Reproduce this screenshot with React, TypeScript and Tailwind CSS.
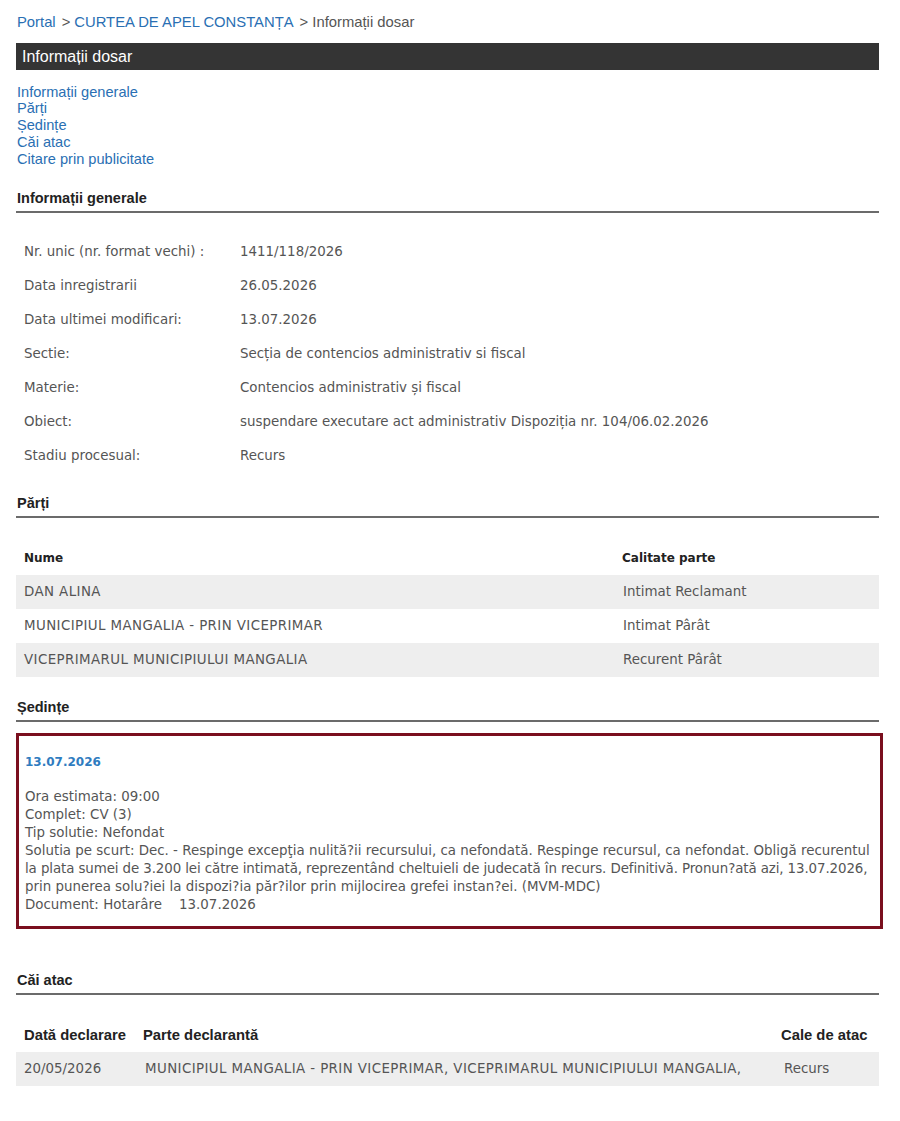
const arial = "font-['Liberation_Sans',Arial,sans-serif]";
const verdana = "font-['DejaVu_Sans',Verdana,sans-serif]";

const info = [
  ["Nr. unic (nr. format vechi) :", "1411/118/2026"],
  ["Data inregistrarii", "26.05.2026"],
  ["Data ultimei modificari:", "13.07.2026"],
  ["Sectie:", "Secția de contencios administrativ si fiscal"],
  ["Materie:", "Contencios administrativ și fiscal"],
  ["Obiect:", "suspendare executare act administrativ Dispoziția nr. 104/06.02.2026"],
  ["Stadiu procesual:", "Recurs"],
];

const parti = [
  ["DAN ALINA", "Intimat Reclamant"],
  ["MUNICIPIUL MANGALIA - PRIN VICEPRIMAR", "Intimat Pârât"],
  ["VICEPRIMARUL MUNICIPIULUI MANGALIA", "Recurent Pârât"],
];

const SectionTitle = ({ title, className }: { title: string; className?: string }) => (
  <div className={`${arial} ${className} text-[14.5px] font-bold text-[#222] leading-[16px] pl-[1px] pb-[5px] border-b-2 border-[#6b6b6b]`}>
    {title}
  </div>
);

export default function App() {
  return (
    <div className="bg-white min-h-[1121px] w-[900px] pl-[16px] pt-[14px] pb-[30px]">
      <div className="w-[863px]">
        {/* breadcrumb */}
        <div className={`${arial} text-[14.8px] leading-[16px] pl-[1px] text-[#555]`}>
          <span className="text-[#2a6fb3]">Portal</span>
          <span className="ml-[6px]">&gt;</span>
          <span className="text-[#2a6fb3] ml-[4px]">CURTEA DE APEL CONSTANȚA</span>
          <span className="ml-[6px]">&gt; Informații dosar</span>
        </div>

        <div className={`${arial} mt-[13px] h-[27px] bg-[#343434] text-white text-[16px] leading-[27px] pl-[6px]`}>
          Informații dosar
        </div>

        {/* nav */}
        <div className={`${arial} mt-[13.5px] text-[14.6px] leading-[16.75px] text-[#2a6fb3] pl-[1px] flex flex-col items-start`}>
          <a href="#gen">Informații generale</a>
          <a href="#parti">Părți</a>
          <a href="#sed">Ședințe</a>
          <a href="#cai">Căi atac</a>
          <a href="#cit">Citare prin publicitate</a>
        </div>

        <SectionTitle title="Informații generale" className="mt-[22.5px]" />
        <div className={`${verdana} mt-[22px] text-[13.4px] text-[#555]`}>
          {info.map(([k, v]) => (
            <div key={k} className="h-[34px] flex items-center">
              <div className="w-[224px] pl-[8px]">{k}</div>
              <div>{v}</div>
            </div>
          ))}
        </div>

        <SectionTitle title="Părți" className="mt-[22px]" />
        <div className={`${verdana} mt-[23px] text-[13.4px]`}>
          <div className="h-[34px] grid grid-cols-[598px_1fr] items-center font-bold text-[12px] text-[#222]">
            <div className="pl-[8px]">Nume</div>
            <div className="pl-[8px]">Calitate parte</div>
          </div>
          {parti.map(([n, c], i) => (
            <div
              key={n}
              className={`h-[34px] grid grid-cols-[598px_1fr] items-center text-[#555] ${i % 2 === 0 ? "bg-[#eeeeee]" : "bg-white"}`}
            >
              <div className="pl-[8px] tracking-[0.4px]">{n}</div>
              <div className="pl-[9px]">{c}</div>
            </div>
          ))}
        </div>

        <SectionTitle title="Ședințe" className="mt-[22px]" />
        <div className={`${verdana} mt-[11px] w-[867px] border-[3px] border-[#7a0f1e] pl-[6px] pt-[17px] pb-[12px] text-[13.4px] text-[#555]`}>
          <div className="text-[12px] leading-[18px] font-bold text-[#2f7cc0]">13.07.2026</div>
          <div className="mt-[17px] leading-[18px] whitespace-nowrap">
            Ora estimata: 09:00
            <br />
            Complet: CV (3)
            <br />
            Tip solutie: Nefondat
            <br />
            Solutia pe scurt: Dec. - Respinge excepţia nulită?ii recursului, ca nefondată. Respinge recursul, ca nefondat. Obligă recurentul
            <br />
            <span className="tracking-[-0.1px]">
              la plata sumei de 3.200 lei către intimată, reprezentând cheltuieli de judecată în recurs. Definitivă. Pronun?ată azi, 13.07.2026,
            </span>
            <br />
            prin punerea solu?iei la dispozi?ia păr?ilor prin mijlocirea grefei instan?ei. (MVM-MDC)
            <br />
            Document: Hotarâre&nbsp;&nbsp;&nbsp;&nbsp;13.07.2026
          </div>
        </div>

        <SectionTitle title="Căi atac" className="mt-[43px]" />
        <div className="mt-[23px]">
          <div className={`${arial} h-[34px] grid grid-cols-[119px_1fr_106px] items-center text-[14.8px] font-bold text-[#222]`}>
            <div className="pl-[8px]">Dată declarare</div>
            <div className="pl-[8px]">Parte declarantă</div>
            <div className="pl-[8px]">Cale de atac</div>
          </div>
          <div className={`${verdana} h-[34px] grid grid-cols-[119px_1fr_106px] items-center text-[13.4px] text-[#555] bg-[#eeeeee]`}>
            <div className="pl-[8px]">20/05/2026</div>
            <div className="pl-[10px] whitespace-nowrap tracking-[0.4px]">MUNICIPIUL MANGALIA - PRIN VICEPRIMAR, VICEPRIMARUL MUNICIPIULUI MANGALIA,</div>
            <div className="pl-[11px]">Recurs</div>
          </div>
        </div>
      </div>
    </div>
  );
}
